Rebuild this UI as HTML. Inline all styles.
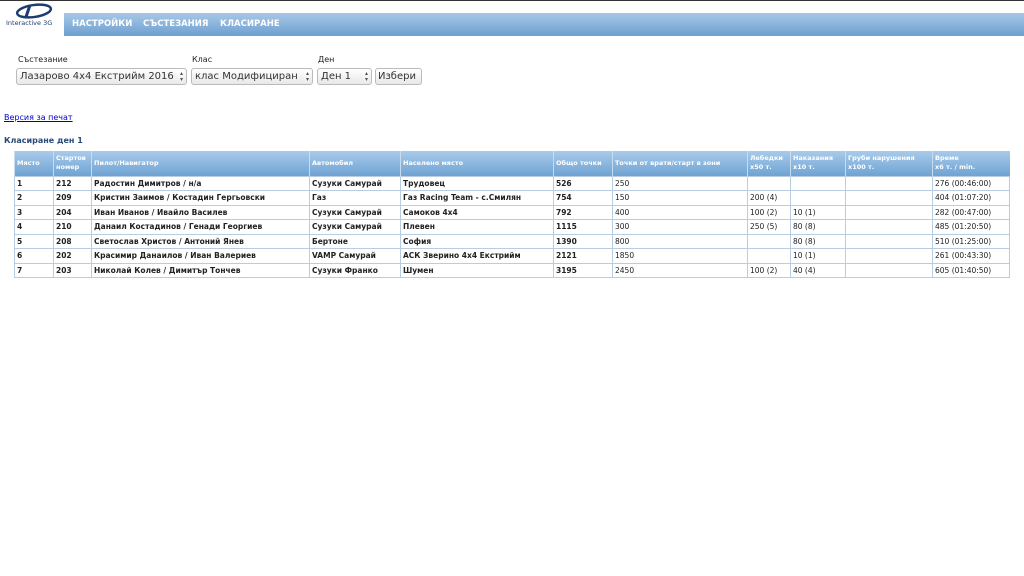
<!DOCTYPE html>
<html><head><meta charset="utf-8">
<style>
*{margin:0;padding:0;box-sizing:border-box}
body{width:1024px;height:576px;background:#fff;font-family:"DejaVu Sans","Liberation Sans",sans-serif;position:relative;overflow:hidden;border-top:1px solid #333}
.logo{position:absolute;left:4px;top:2px;width:60px;height:30px}
.logo span{position:absolute;left:2px;top:16px;font-size:6.5px;color:#1d3c70;white-space:nowrap}
.nav{position:absolute;left:64px;top:12px;right:0;height:23px;background:linear-gradient(#a6c8e8,#6e9fcf);}
.nav a{position:absolute;top:6px;color:#fff;font-size:8.5px;font-weight:bold;text-decoration:none}
.lbl{position:absolute;top:54px;font-size:8px;color:#222}
.sel{position:absolute;top:67px;height:17px;border:1px solid #bbb;border-radius:3px;background:linear-gradient(#fff,#e8e8e8);font-size:10px;color:#333;padding:2px 3px;white-space:nowrap;overflow:hidden;font-family:"DejaVu Sans",sans-serif}
.sel i{position:absolute;right:3px;top:2px;font-style:normal;font-size:6px;line-height:6px;color:#555;background:linear-gradient(#fff,#ececec);padding-left:2px}
.print{position:absolute;left:4px;top:112px;font-size:8px;color:#00c;text-decoration:underline}
.h{position:absolute;left:4px;top:135px;font-size:8px;font-weight:bold;color:#2a4a7a}
table{position:absolute;left:14px;top:150px;width:996px;border-collapse:collapse;font-size:7.5px}
th{background:linear-gradient(#a8cbea,#6fa3d3);color:#fff;font-weight:bold;text-align:left;vertical-align:middle;padding:2px 2px;height:25px;font-size:6.5px;border-left:1px solid #c8dcef;line-height:9px}
td{height:14.5px;padding:0 2px;border:1px solid #b8cde2;color:#222}
td.b{font-weight:bold}
</style></head><body>
<div class="logo"><svg width="60" height="18" viewBox="0 0 60 18"><ellipse cx="30" cy="8" rx="17" ry="6" fill="none" stroke="#1d3c70" stroke-width="2.5" transform="rotate(-8 30 8)"/><path d="M26 2 L22 14" stroke="#1d3c70" stroke-width="3"/></svg><span>Interactive 3G</span></div>
<div class="nav"><a style="left:8px">НАСТРОЙКИ</a><a style="left:79px">СЪСТЕЗАНИЯ</a><a style="left:156px">КЛАСИРАНЕ</a></div>
<div class="lbl" style="left:18px">Състезание</div>
<div class="lbl" style="left:192px">Клас</div>
<div class="lbl" style="left:318px">Ден</div>
<div class="sel" style="left:16px;width:171px">Лазарово 4x4 Екстрийм 2016<i>▴<br>▾</i></div>
<div class="sel" style="left:191px;width:122px">клас Модифициран<i>▴<br>▾</i></div>
<div class="sel" style="left:317px;width:55px">Ден 1<i>▴<br>▾</i></div>
<div class="sel" style="left:375px;width:47px;padding:2px 2px">Избери</div>
<div class="print">Версия за печат</div>
<div class="h">Класиране ден 1</div>
<table>
<tr><th style="width:39px">Място</th><th style="width:38px">Стартов<br>номер</th><th style="width:218px">Пилот/Навигатор</th><th style="width:91px">Автомобил</th><th style="width:153px">Населено място</th><th style="width:59px">Общо точки</th><th style="width:135px">Точки от врати/старт в зони</th><th style="width:43px">Лебедки<br>x50 т.</th><th style="width:55px">Наказания<br>x10 т.</th><th style="width:87px">Груби нарушения<br>x100 т.</th><th>Време<br>x6 т. / min.</th></tr>
<tr><td class="b">1</td><td class="b">212</td><td class="b">Радостин Димитров / н/а</td><td class="b">Сузуки Самурай</td><td class="b">Трудовец</td><td class="b">526</td><td>250</td><td></td><td></td><td></td><td>276 (00:46:00)</td></tr>
<tr><td class="b">2</td><td class="b">209</td><td class="b">Кристин Заимов / Костадин Гергьовски</td><td class="b">Газ</td><td class="b">Газ Racing Team - с.Смилян</td><td class="b">754</td><td>150</td><td>200 (4)</td><td></td><td></td><td>404 (01:07:20)</td></tr>
<tr><td class="b">3</td><td class="b">204</td><td class="b">Иван Иванов / Ивайло Василев</td><td class="b">Сузуки Самурай</td><td class="b">Самоков 4x4</td><td class="b">792</td><td>400</td><td>100 (2)</td><td>10 (1)</td><td></td><td>282 (00:47:00)</td></tr>
<tr><td class="b">4</td><td class="b">210</td><td class="b">Данаил Костадинов / Генади Георгиев</td><td class="b">Сузуки Самурай</td><td class="b">Плевен</td><td class="b">1115</td><td>300</td><td>250 (5)</td><td>80 (8)</td><td></td><td>485 (01:20:50)</td></tr>
<tr><td class="b">5</td><td class="b">208</td><td class="b">Светослав Христов / Антоний Янев</td><td class="b">Бертоне</td><td class="b">София</td><td class="b">1390</td><td>800</td><td></td><td>80 (8)</td><td></td><td>510 (01:25:00)</td></tr>
<tr><td class="b">6</td><td class="b">202</td><td class="b">Красимир Данаилов / Иван Валериев</td><td class="b">VAMP Самурай</td><td class="b">АСК Зверино 4x4 Екстрийм</td><td class="b">2121</td><td>1850</td><td></td><td>10 (1)</td><td></td><td>261 (00:43:30)</td></tr>
<tr><td class="b">7</td><td class="b">203</td><td class="b">Николай Колев / Димитър Тончев</td><td class="b">Сузуки Франко</td><td class="b">Шумен</td><td class="b">3195</td><td>2450</td><td>100 (2)</td><td>40 (4)</td><td></td><td>605 (01:40:50)</td></tr>
</table>
</body></html>
